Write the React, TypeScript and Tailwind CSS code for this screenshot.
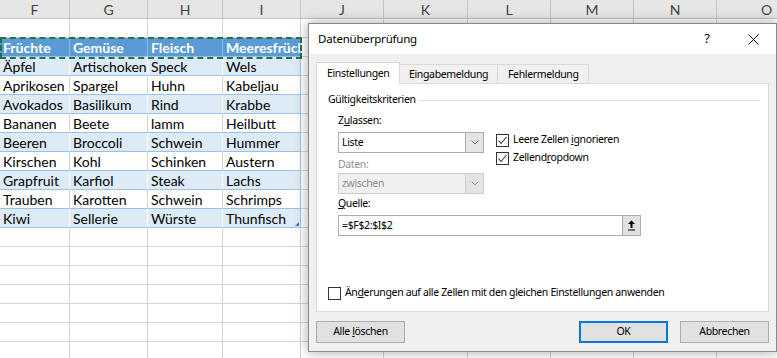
import React from "react";

const colW = [70, 78, 75, 78, 83, 84, 83, 83, 83, 100];
const colL = ["F", "G", "H", "I", "J", "K", "L", "M", "N", "O"];

const table: string[][] = [
  ["Früchte", "Gemüse", "Fleisch", "Meeresfrüchte"],
  ["Äpfel", "Artischoken", "Speck", "Wels"],
  ["Aprikosen", "Spargel", "Huhn", "Kabeljau"],
  ["Avokados", "Basilikum", "Rind", "Krabbe"],
  ["Bananen", "Beete", "lamm", "Heilbutt"],
  ["Beeren", "Broccoli", "Schwein", "Hummer"],
  ["Kirschen", "Kohl", "Schinken", "Austern"],
  ["Grapfruit", "Karfiol", "Steak", "Lachs"],
  ["Trauben", "Karotten", "Schwein", "Schrimps"],
  ["Kiwi", "Sellerie", "Würste", "Thunfisch"],
];

function Chevron({ color = "#6d6d6d" }: { color?: string }) {
  return (
    <svg width="8" height="5" viewBox="0 0 8 5">
      <polyline points="0.5,0.5 4,4 7.5,0.5" fill="none" stroke={color} strokeWidth="1" />
    </svg>
  );
}

function Check() {
  return (
    <svg width="11" height="11" viewBox="0 0 11 11">
      <polyline points="1.5,5.5 4,8.5 9.5,2" fill="none" stroke="#333" strokeWidth="1.1" />
    </svg>
  );
}

function CheckBox({ checked }: { checked: boolean }) {
  return (
    <div className="w-[13px] h-[13px] border border-[#333] bg-white flex items-center justify-center shrink-0">
      {checked && <Check />}
    </div>
  );
}

function Sheet() {
  const rows = [];
  rows.push(
    <div key="hdr" className="flex h-[19px]">
      {colW.map((w, i) => (
        <div
          key={i}
          style={{ width: w }}
          className="shrink-0 h-full bg-[#e6e6e6] border-r border-b border-[#c4c4c4] flex items-center justify-center text-[14px] text-[#444] font-['Lato',sans-serif]"
        >
          {colL[i]}
        </div>
      ))}
    </div>
  );
  for (let r = 0; r < 19; r++) {
    const t = r - 1;
    const inTable = t >= 0 && t < table.length;
    rows.push(
      <div key={r} className="flex h-[19px]">
        {colW.map((w, c) => {
          if (inTable && c < 4) {
            const isHead = t === 0;
            const banded = t > 0 && t % 2 === 1;
            const bg = isHead ? "bg-[#5b9bd5]" : banded ? "bg-[#ddebf7]" : "bg-white";
            const br =
              c === 3
                ? "border-r-[#9bc2e6]"
                : isHead
                ? "border-r-[#8db9e2]"
                : banded
                ? "border-r-white"
                : "border-r-[#d4d4d4]";
            return (
              <div
                key={c}
                style={{ width: w }}
                className={`relative shrink-0 h-full border-r border-b border-b-[#9bc2e6] ${br} ${bg} overflow-hidden whitespace-nowrap pl-[3px] flex items-center text-[14px] font-['Lato',sans-serif] ${
                  isHead ? "text-white font-bold" : "text-black"
                }`}
              >
                {table[t][c]}
                {t === table.length - 1 && c === 3 && (
                  <div className="absolute right-[1px] bottom-[1px] w-0 h-0 border-l-[4px] border-l-transparent border-b-[4px] border-b-[#4472c4]" />
                )}
              </div>
            );
          }
          return (
            <div
              key={c}
              style={{ width: w }}
              className="shrink-0 h-full border-r border-b border-[#d4d4d4] bg-white"
            />
          );
        })}
      </div>
    );
  }
  return (
    <div className="relative">
      {rows}
      <div className="absolute left-0 top-[37px] w-[302px] h-[22px] border-2 border-dashed border-[#217346]" />
    </div>
  );
}

function Select({ value, disabled }: { value: string; disabled?: boolean }) {
  return (
    <div
      className={`flex h-[21px] w-[146px] border ${
        disabled ? "border-[#cccccc] bg-[#f0f0f0]" : "border-[#acacac] bg-white"
      }`}
    >
      <div className={`flex-1 flex items-center pl-[3px] ${disabled ? "text-[#8f8f8f]" : "text-black"}`}>
        {value}
      </div>
      <div
        className={`w-[18px] flex items-center justify-center border-l ${
          disabled ? "bg-[#e3e3e3] border-[#cccccc]" : "bg-[#e5e5e5] border-[#acacac]"
        }`}
      >
        <Chevron color={disabled ? "#9a9a9a" : "#707070"} />
      </div>
    </div>
  );
}

function Dialog() {
  const font = "font-['Noto_Sans',sans-serif] text-[10.5px] tracking-[-0.35px]";
  return (
    <div
      className={`absolute left-[308px] top-[23px] w-[469px] h-[329px] border border-[#8a8a8a] bg-[#f0f0f0] shadow-[0_0_12px_rgba(0,0,0,0.35)] flex flex-col ${font} text-black`}
    >
      <div className="h-[30px] bg-white flex items-center shrink-0">
        <div className="pl-[9px] flex-1 text-[11.5px] tracking-[-0.2px]">Datenüberprüfung</div>
        <div className="w-[46px] text-center text-[13px] tracking-normal">?</div>
        <div className="w-[46px] flex items-center justify-center">
          <svg width="11" height="11" viewBox="0 0 11 11">
            <line x1="0.5" y1="0.5" x2="10.5" y2="10.5" stroke="#000" strokeWidth="1" />
            <line x1="10.5" y1="0.5" x2="0.5" y2="10.5" stroke="#000" strokeWidth="1" />
          </svg>
        </div>
      </div>
      <div className="flex pl-[7px] mt-[8px] h-[22px] items-end relative z-10">
        <div className="w-[84px] h-[22px] bg-white border border-b-0 border-[#d9d9d9] pl-[10px] flex items-center">
          Einstellungen
        </div>
        <div className="w-[98px] h-[20px] border border-l-0 border-[#d9d9d9] border-b-0 pl-[9px] flex items-center">
          Eingabemeldung
        </div>
        <div className="w-[91px] h-[20px] border border-l-0 border-[#d9d9d9] border-b-0 pl-[10px] flex items-center">
          Fehlermeldung
        </div>
      </div>
      <div className="mx-[7px] -mt-px h-[229px] bg-white border border-[#d9d9d9] flex flex-col">
        <div className="mt-[8px] h-[16px] flex items-center pl-[11px] pr-[8px]">
          <span>Gültigkeitskriterien</span>
          <div className="flex-1 ml-[4px] h-px bg-[#dcdcdc]" />
        </div>
        <div className="flex pl-[21px]">
          <div className="flex flex-col">
            <div className="mt-[5px] h-[16px] flex items-center">
              Z<span className="underline">u</span>lassen:
            </div>
            <div className="mt-[3px]">
              <Select value="Liste" />
            </div>
            <div className="mt-[4px] h-[16px] flex items-center text-[#8f8f8f]">Daten:</div>
            <Select value="zwischen" disabled />
          </div>
          <div className="ml-[12px] pt-[23px] flex flex-col">
            <div className="h-[18px] flex items-center gap-[4px]">
              <CheckBox checked />
              <span>
                Leere Zellen <span className="underline">i</span>gnorieren
              </span>
            </div>
            <div className="h-[18px] flex items-center gap-[4px]">
              <CheckBox checked />
              <span>
                Zellend<span className="underline">r</span>opdown
              </span>
            </div>
          </div>
        </div>
        <div className="pl-[21px]">
          <div className="mt-[2px] h-[16px] flex items-center">
            <span className="underline">Q</span>uelle:
          </div>
          <div className="mt-[3px] w-[303px] h-[21px] border border-[#acacac] bg-white flex">
            <div className="flex-1 flex items-center pl-[3px]">=$F$2:$I$2</div>
            <div className="w-[18px] h-[19px] bg-[#e1e1e1] border-l border-[#adadad] flex items-center justify-center">
              <svg width="9" height="11" viewBox="0 0 9 11">
                <polygon points="4.5,0.5 8,4 1,4" fill="#000" />
                <rect x="3.5" y="3.5" width="2" height="4.5" fill="#000" />
                <rect x="1" y="9.5" width="7" height="1" fill="#000" />
              </svg>
            </div>
          </div>
        </div>
        <div className="mt-auto mb-[10px] h-[16px] pl-[11px] flex items-center gap-[4px]">
          <CheckBox checked={false} />
          <span>
            Än<span className="underline">d</span>erungen auf alle Zellen mit den gleichen Einstellungen anwenden
          </span>
        </div>
      </div>
      <div className="flex mt-[9px] pl-[7px] pr-[7px]">
        <div className="w-[89px] h-[22px] bg-[#e1e1e1] border border-[#adadad] flex items-center justify-center">
          <span>
            Alle <span className="underline">l</span>öschen
          </span>
        </div>
        <div className="flex-1" />
        <div className="w-[89px] h-[22px] bg-[#e1e1e1] border border-[#0078d7] shadow-[inset_0_0_0_1px_#0078d7] flex items-center justify-center">
          OK
        </div>
        <div className="ml-[12px] w-[89px] h-[22px] bg-[#e1e1e1] border border-[#adadad] flex items-center justify-center">
          Abbrechen
        </div>
      </div>
    </div>
  );
}

export default function App() {
  return (
    <div className="relative w-[777px] h-[358px] overflow-hidden bg-white">
      <Sheet />
      <Dialog />
    </div>
  );
}
